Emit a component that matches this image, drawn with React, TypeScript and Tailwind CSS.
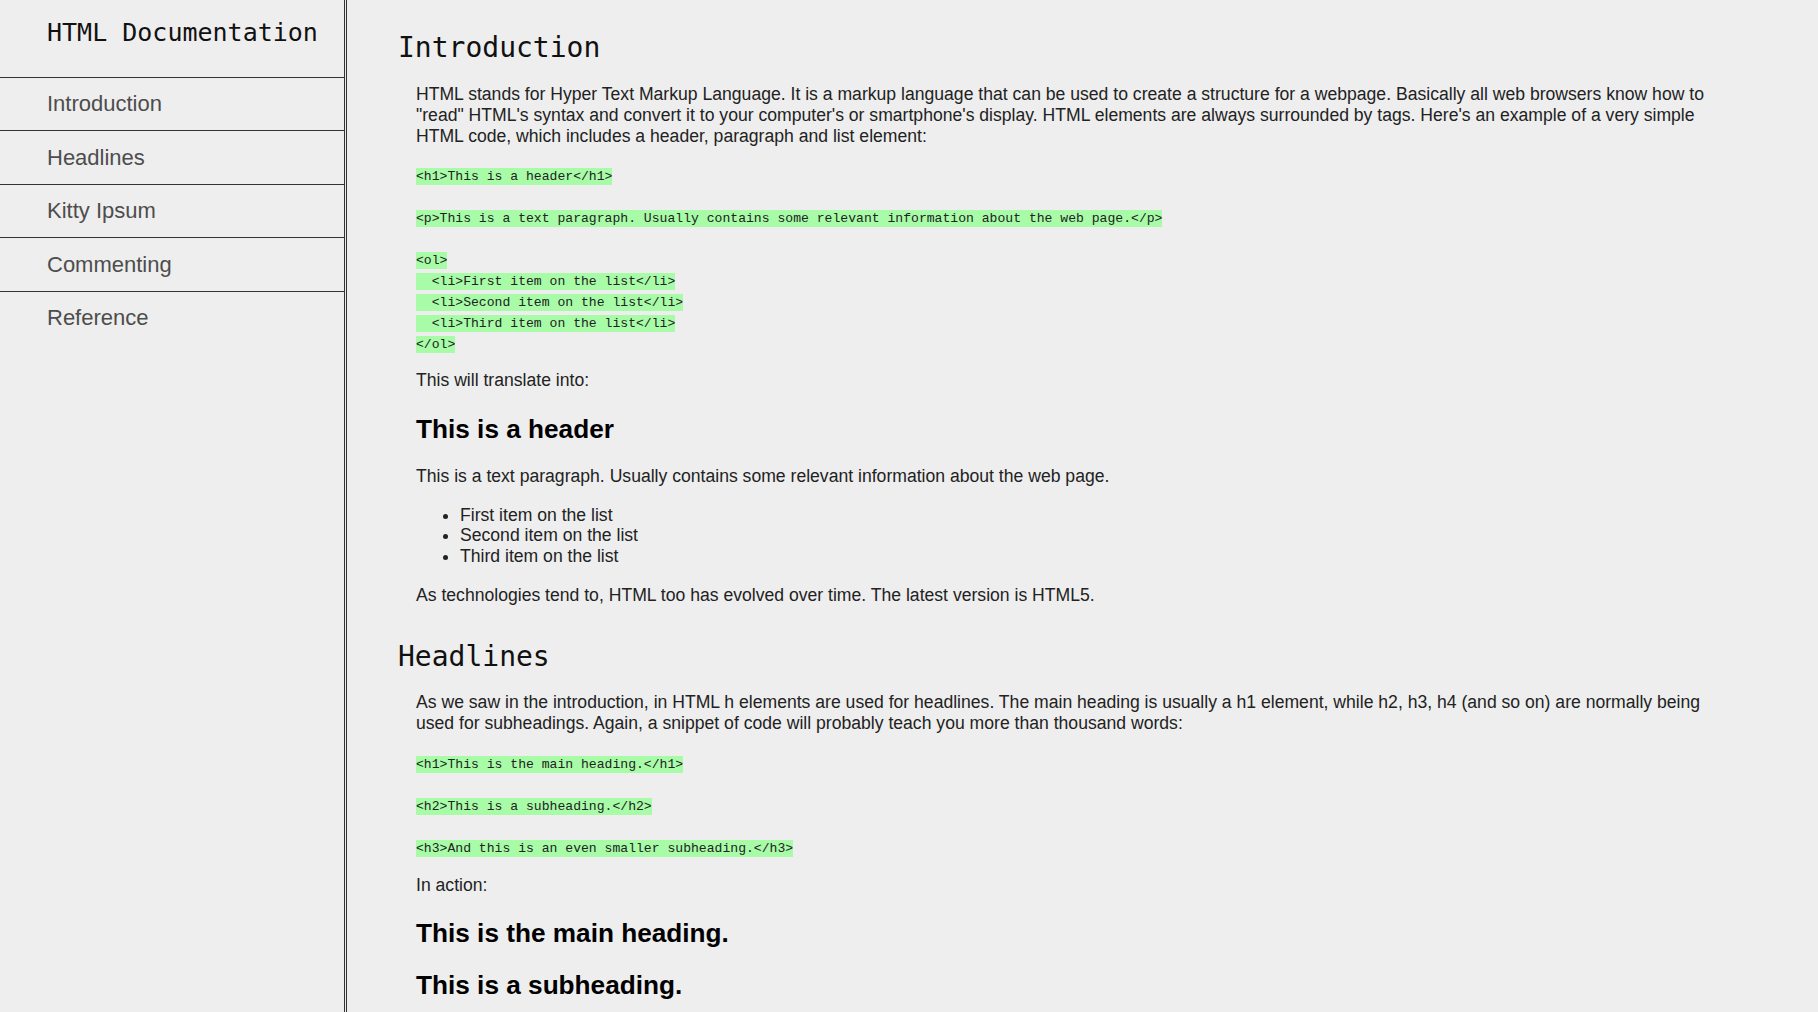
import React from "react";

const navItems = ["Introduction", "Headlines", "Kitty Ipsum", "Commenting", "Reference"];

const sans = "font-['Liberation_Sans',Arial,sans-serif]";
const mono = "font-['DejaVu_Sans_Mono',monospace]";

function CodeBlock({ lines, className = "" }: { lines: string[]; className?: string }) {
  return (
    <div className={`${mono} text-[13.1px] leading-[21px] whitespace-pre text-[#222] ${className}`}>
      {lines.map((line, i) => (
        <div key={i} className="h-[21px]">
          {line && <code className="bg-[#a8fca8] py-[1px]">{line}</code>}
        </div>
      ))}
    </div>
  );
}

function SectionTitle({ children, className = "" }: { children: React.ReactNode; className?: string }) {
  return (
    <h2 className={`${mono} text-[28px] leading-[33px] font-normal text-[#111] ${className}`}>{children}</h2>
  );
}

function Example({ children, className = "" }: { children: React.ReactNode; className?: string }) {
  return <h3 className={`${sans} text-[26.2px] leading-[30px] font-bold text-black ${className}`}>{children}</h3>;
}

export default function App() {
  return (
    <div className={`flex h-screen overflow-hidden bg-[#eeeeee] ${sans}`}>
      {/* Sidebar */}
      <nav className="w-[347px] shrink-0 border-r-[3px] border-double border-[#333]">
        <header className="h-[76.5px] pt-[18px] pl-[47px]">
          <h1 className={`${mono} text-[25px] leading-[29px] font-normal text-[#111]`}>HTML Documentation</h1>
        </header>
        <ul>
          {navItems.map((item) => (
            <li key={item} className="border-t border-[#333] h-[53.5px] flex items-center pl-[47px]">
              <a href={`#${item.replace(" ", "_")}`} className="text-[22px] leading-[25px] text-[#4d4d4d]">
                {item}
              </a>
            </li>
          ))}
        </ul>
      </nav>

      {/* Main */}
      <main className="flex-1 overflow-hidden pl-[51px] pr-[98px] pt-[31px] text-[#222]">
        <section id="Introduction">
          <SectionTitle>Introduction</SectionTitle>
          <div className="ml-[18px] text-[17.6px] leading-[21px]">
            <p className="mt-[19.5px]">
              HTML stands for Hyper Text Markup Language. It is a markup language that can be used to create a
              structure for a webpage. Basically all web browsers know how to "read" HTML's syntax and convert it to
              your computer's or smartphone's display. HTML elements are always surrounded by tags. Here's an example
              of a very simple HTML code, which includes a header, paragraph and list element:
            </p>
            <CodeBlock
              className="mt-[18px]"
              lines={[
                "<h1>This is a header</h1>",
                "",
                "<p>This is a text paragraph. Usually contains some relevant information about the web page.</p>",
                "",
                "<ol>",
                "  <li>First item on the list</li>",
                "  <li>Second item on the list</li>",
                "  <li>Third item on the list</li>",
                "</ol>",
              ]}
            />
            <p className="mt-[16px]">This will translate into:</p>
            <Example className="mt-[23.5px]">This is a header</Example>
            <p className="mt-[22px]">This is a text paragraph. Usually contains some relevant information about the web page.</p>
            <ul className="mt-[17.6px] list-disc pl-[44px] leading-[20.75px]">
              <li>First item on the list</li>
              <li>Second item on the list</li>
              <li>Third item on the list</li>
            </ul>
            <p className="mt-[18.6px]">As technologies tend to, HTML too has evolved over time. The latest version is HTML5.</p>
          </div>
        </section>

        <section id="Headlines">
          <SectionTitle className="mt-[34px]">Headlines</SectionTitle>
          <div className="ml-[18px] text-[17.6px] leading-[21px]">
            <p className="mt-[18.5px]">
              As we saw in the introduction, in HTML h elements are used for headlines. The main heading is usually a
              h1 element, while h2, h3, h4 (and so on) are normally being used for subheadings. Again, a snippet of
              code will probably teach you more than thousand words:
            </p>
            <CodeBlock
              className="mt-[19.5px]"
              lines={[
                "<h1>This is the main heading.</h1>",
                "",
                "<h2>This is a subheading.</h2>",
                "",
                "<h3>And this is an even smaller subheading.</h3>",
              ]}
            />
            <p className="mt-[17px]">In action:</p>
            <Example className="mt-[21.5px]">This is the main heading.</Example>
            <Example className="mt-[22.5px]">This is a subheading.</Example>
          </div>
        </section>
      </main>
    </div>
  );
}
